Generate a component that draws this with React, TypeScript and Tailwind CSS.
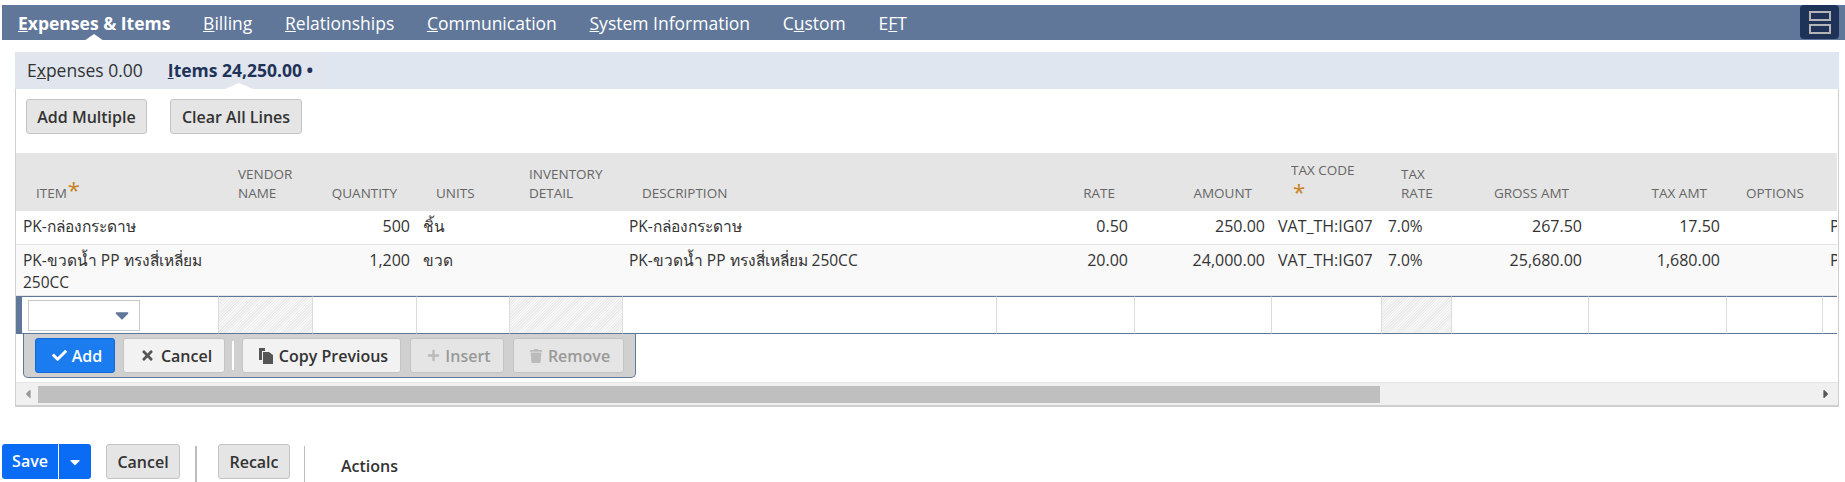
import { FaCheck, FaTimes, FaPlus, FaTrash, FaCaretDown, FaCaretLeft, FaCaretRight } from 'react-icons/fa';

const navTabs = [
  { key: 'E', rest: 'xpenses & Items', active: true },
  { key: 'B', rest: 'illing' },
  { key: 'R', rest: 'elationships' },
  { key: 'C', rest: 'ommunication' },
  { key: 'S', rest: 'ystem Information' },
];

const colWidths = ['w-[202px]', 'w-[94px]', 'w-[104px]', 'w-[93px]', 'w-[113px]', 'w-[374px]', 'w-[138px]', 'w-[137px]', 'w-[110px]', 'w-[70px]', 'w-[137px]', 'w-[138px]', 'w-[96px]', 'w-[15px]'];

const rows = [
  { item: 'PK-กล่องกระดาษ', qty: '500', units: 'ชิ้น', desc: 'PK-กล่องกระดาษ', rate: '0.50', amount: '250.00', gross: '267.50', tax: '17.50', bg: 'bg-white', h: 'h-[34px]' },
  { item: 'PK-ขวดน้ำ PP ทรงสี่เหลี่ยม 250CC', qty: '1,200', units: 'ขวด', desc: 'PK-ขวดน้ำ PP ทรงสี่เหลี่ยม 250CC', rate: '20.00', amount: '24,000.00', gross: '25,680.00', tax: '1,680.00', bg: 'bg-[#f9f9f9]', h: 'h-[51px]' },
];

const thLeft = 'pl-[20px] pb-[8px] text-left align-bottom font-normal';
const thRight = 'pr-[19px] pb-[8px] text-right align-bottom font-normal';
const td = 'px-[7px] pt-[4px] align-top border-b border-[#e5e5e5] text-[15.5px]';
const tdCode = 'px-[7px] pt-[4px] align-top border-b border-[#e5e5e5] text-[16px] whitespace-nowrap';
const tdRight = 'pr-[6px] pt-[4px] text-right align-top border-b border-[#e5e5e5] text-[16px]';
const hatch = 'bg-[repeating-linear-gradient(135deg,#ebebeb_0,#ebebeb_1px,#f7f7f7_1px,#f7f7f7_2px)]';
const inputCell = 'border-l border-[#dcdcdc] border-y border-y-[#607799]';

function Star({ className = '' }: { className?: string }) {
  return <span className={`text-[22px] leading-[10px] text-[#c9811a] ${className}`}>*</span>;
}

function GrayButton({ label, className = '' }: { label: string; className?: string }) {
  return (
    <button className={`h-[35px] rounded-[3px] border border-[#c4c4c4] bg-[#e5e5e5] text-[16px] font-semibold text-[#333] ${className}`}>
      {label}
    </button>
  );
}

function CopyIcon() {
  return (
    <svg width="14" height="16" viewBox="0 0 14 16" className="text-[#555]">
      <path d="M0 0h6v3H3v9H0z" fill="currentColor" />
      <path d="M4 4h6l4 3v9H4z" fill="currentColor" />
    </svg>
  );
}

export default function App() {
  return (
    <div className="h-[482px] w-[1845px] overflow-hidden bg-white pt-[5px] font-['Open_Sans','Noto_Sans',sans-serif] text-[15px] text-[#333]">
      <div className="relative ml-[2px] flex h-[35px] items-center bg-[#607799] text-[17.5px] leading-[24px] text-white">
        <div className="ml-[16px] flex items-center">
          {navTabs.map((t) => (
            <span key={t.key} className={`relative mr-[32.7px] ${t.active ? 'font-bold' : ''}`}>
              <span className="underline">{t.key}</span>{t.rest}
              {t.active && <span className="absolute bottom-[-6px] left-[66px] h-0 w-0 border-x-[10px] border-b-[7px] border-x-transparent border-b-white" />}
            </span>
          ))}
          <span className="mr-[32.7px]">C<span className="underline">u</span>stom</span>
          <span>E<span className="underline">F</span>T</span>
        </div>
        <div className="ml-auto mr-[6px] flex h-[34px] w-[39px] flex-col items-center justify-center gap-[3px] self-start rounded-[4px] bg-[#1f3358]">
          <span className="h-[10px] w-[22px] border-2 border-[#b5b5b5]" />
          <span className="h-[10px] w-[22px] border-2 border-[#b5b5b5]" />
        </div>
      </div>

      <div className="ml-[15px] mt-[12px] w-[1824px]">
        <div className="flex h-[37px] items-center bg-[#dfe6f0]">
          <div className="relative flex h-full w-[311px] items-center bg-[#e0e5ee] pl-[12px] text-[17.5px]">
            <span className="mr-[25px] text-[#333]">E<span className="underline">x</span>penses 0.00</span>
            <span className="font-bold text-[#1f3358]"><span className="underline">I</span>tems 24,250.00 •</span>
            <span className="absolute bottom-0 left-[210px] h-0 w-0 border-x-[14px] border-b-[6px] border-x-transparent border-b-white" />
          </div>
        </div>

        <div className="border-x border-b-2 border-[#cfcfcf]">
          <div className="flex h-[64px] items-start gap-[23px] pl-[10px] pt-[10px]">
            <GrayButton label="Add Multiple" className="w-[121px]" />
            <GrayButton label="Clear All Lines" className="w-[132px]" />
          </div>

          <div className="w-[1821px] overflow-hidden">
            <table className="w-[1821px] table-fixed border-separate border-spacing-0">
              <colgroup>
                {colWidths.map((w, i) => <col key={i} className={w} />)}
              </colgroup>
              <thead>
                <tr className="h-[58px] bg-[#e5e5e5] text-[13.5px] uppercase leading-[19px] text-[#666]">
                  <th className={thLeft}>Item<Star className="ml-[1px] align-[0px]" /></th>
                  <th className={thLeft}>Vendor<br />Name</th>
                  <th className={thRight}>Quantity</th>
                  <th className={thLeft}>Units</th>
                  <th className={thLeft}>Inventory<br />Detail</th>
                  <th className={thLeft}>Description</th>
                  <th className={thRight}>Rate</th>
                  <th className={thRight}>Amount</th>
                  <th className="pb-[12px] pl-[20px] text-left align-bottom font-normal">Tax Code<br /><Star className="relative top-[6px] ml-[2px]" /></th>
                  <th className={thLeft}>Tax<br />Rate</th>
                  <th className={thRight}>Gross Amt</th>
                  <th className={thRight}>Tax Amt</th>
                  <th className={thLeft}>Options</th>
                  <th />
                </tr>
              </thead>
              <tbody className="leading-[22px]">
                {rows.map((r) => (
                  <tr key={r.item} className={`${r.bg} ${r.h}`}>
                    <td className={td}>{r.item}</td>
                    <td className={td} />
                    <td className={tdRight}>{r.qty}</td>
                    <td className={td}>{r.units}</td>
                    <td className={td} />
                    <td className={td}>{r.desc}</td>
                    <td className={tdRight}>{r.rate}</td>
                    <td className={tdRight}>{r.amount}</td>
                    <td className={tdCode}>VAT_TH:IG07</td>
                    <td className={td}>7.0%</td>
                    <td className={tdRight}>{r.gross}</td>
                    <td className={tdRight}>{r.tax}</td>
                    <td className={td} />
                    <td className="overflow-hidden whitespace-nowrap border-b border-[#e5e5e5] pl-[8px] pt-[4px] align-top text-[16px]">PK</td>
                  </tr>
                ))}
                <tr className="h-[38px]">
                  <td className="border-y border-y-[#607799] border-l-[6px] border-l-[#607799] pl-[6px] align-middle">
                    <div className="flex h-[31px] w-[112px] items-center justify-end border border-[#c9c9c9] pr-[6px] text-[#607799]">
                      <FaCaretDown size={22} />
                    </div>
                  </td>
                  <td className={`${inputCell} ${hatch}`} />
                  <td className={inputCell} />
                  <td className={inputCell} />
                  <td className={`${inputCell} ${hatch}`} />
                  <td className={inputCell} />
                  <td className={inputCell} />
                  <td className={inputCell} />
                  <td className={inputCell} />
                  <td className={`${inputCell} ${hatch}`} />
                  <td className={inputCell} />
                  <td className={inputCell} />
                  <td className={inputCell} />
                  <td className={inputCell} />
                </tr>
              </tbody>
            </table>
          </div>

          <div className="ml-[7px] flex h-[44px] w-[613px] items-start rounded-b-[5px] border border-t-0 border-[#607799] bg-[#d0d0d0] pl-[11px] pt-[4px] text-[16px] font-semibold">
            <button className="flex h-[35px] w-[80px] items-center justify-center gap-[5px] rounded-[3px] border border-[#1467d8] bg-[#1b7cf0] pl-[4px] text-white">
              <FaCheck size={15} /> Add
            </button>
            <button className="ml-[8px] flex h-[35px] w-[102px] items-center justify-center gap-[6px] rounded-[3px] border border-[#c4c4c4] bg-[#f2f2f2] pl-[4px] text-[#333]">
              <FaTimes size={15} className="text-[#555]" /> Cancel
            </button>
            <span className="mx-[7px] mt-[3px] h-[29px] w-[2px] bg-white" />
            <button className="ml-[1px] flex h-[35px] w-[159px] items-center justify-center gap-[6px] rounded-[3px] border border-[#c4c4c4] bg-[#f2f2f2] pl-[4px] text-[#333]">
              <CopyIcon /> Copy Previous
            </button>
            <button className="ml-[9px] flex h-[35px] w-[94px] items-center justify-center gap-[5px] rounded-[3px] border border-[#c4c4c4] bg-[#e5e5e5] pl-[4px] text-[#999]">
              <FaPlus size={13} className="text-[#bbb]" /> Insert
            </button>
            <button className="ml-[9px] flex h-[35px] w-[111px] items-center justify-center gap-[5px] rounded-[3px] border border-[#c4c4c4] bg-[#e5e5e5] pl-[2px] text-[#999]">
              <FaTrash size={14} className="text-[#bbb]" /> Remove
            </button>
          </div>

          <div className="mt-[4px] flex h-[23px] items-center border-t border-[#e5e5e5] bg-[#f0f0f0] text-[#555]">
            <FaCaretLeft size={14} className="ml-[5px] mr-[3px] text-[#999]" />
            <div className="h-[17px] w-[1342px] bg-[#bfbfbf]" />
            <FaCaretRight size={14} className="ml-auto mr-[5px]" />
          </div>
        </div>
      </div>

      <div className="mt-[37px] flex items-start pl-[2px] text-[16px] font-semibold">
        <div className="flex h-[35px] w-[89px] items-center rounded-[3px] bg-[#0a6cf5] text-white">
          <span className="w-[57px] border-r border-white text-center leading-[35px]">Save</span>
          <FaCaretDown size={16} className="ml-[8px]" />
        </div>
        <GrayButton label="Cancel" className="ml-[15px] w-[74px]" />
        <span className="ml-[15px] mt-[2px] h-[36px] w-[2px] bg-[#bdbdbd]" />
        <GrayButton label="Recalc" className="ml-[21px] w-[72px]" />
        <span className="ml-[14px] mt-[2px] h-[36px] w-px bg-[#bdbdbd]" />
        <span className="ml-[36px] mt-[12px] leading-[20px] text-[#333]">Actions</span>
      </div>
    </div>
  );
}
